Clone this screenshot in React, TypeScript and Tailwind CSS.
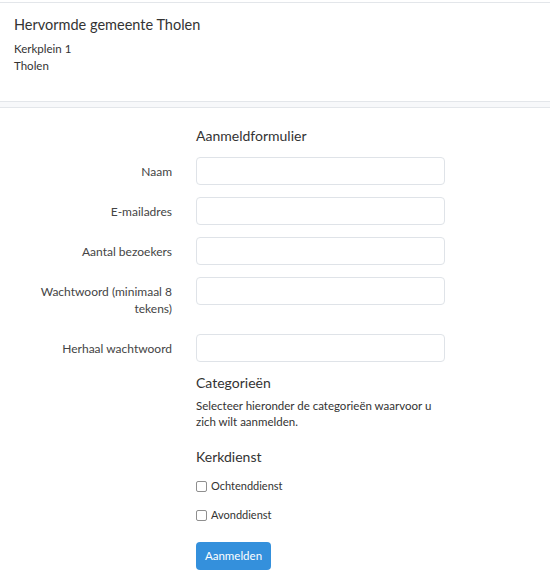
import React from "react";

type Field = { label: string; type: string };

const fields: Field[] = [
  { label: "Naam", type: "text" },
  { label: "E-mailadres", type: "email" },
  { label: "Aantal bezoekers", type: "number" },
  { label: "Wachtwoord (minimaal 8 tekens)", type: "password" },
  { label: "Herhaal wachtwoord", type: "password" },
];

export default function App() {
  return (
    <div className="min-h-[583px] bg-white text-[#212529] font-['Lato',sans-serif] text-[11.5px]">
      {/* kaart met adres */}
      <div className="mt-[2px] border-y border-[#e3e6ea] px-[14px] pt-[12px] h-[100px]">
        <div className="text-[14.5px] leading-[20px] text-[#333]">Hervormde gemeente Tholen</div>
        <div className="mt-[5px] leading-[17px] text-[#333]">Kerkplein 1</div>
        <div className="leading-[17px] text-[#333]">Tholen</div>
      </div>
      <div className="h-[6px] bg-[#f7f8fa] border-b border-[#e3e6ea]" />

      <div className="pt-[18px]">
        <div className="ml-[196px] text-[14px] leading-[20px] text-[#333]">Aanmeldformulier</div>

        <div className="mt-[11px] flex flex-col gap-[12px]">
          {fields.map((f) => (
            <div key={f.label} className="flex items-start">
              <label className="w-[172px] shrink-0 text-right text-[12px] leading-[17px] py-[5.5px] pl-[30px] text-[#444]">
                {f.label}
              </label>
              <input
                type={f.type}
                className="ml-[24px] w-[249px] h-[28px] rounded-[4px] border border-[#dfe3e8] bg-white"
              />
            </div>
          ))}
        </div>

        <div className="ml-[196px] w-[245px]">
          <div className="mt-[12px] text-[14px] leading-[18px] text-[#333]">Categorieën</div>
          <p className="mt-[6px] leading-[16px] text-[#333]">
            Selecteer hieronder de categorieën waarvoor u zich wilt aanmelden.
          </p>
          <div className="mt-[18px] text-[14px] leading-[18px] text-[#333]">Kerkdienst</div>

          <label className="mt-[12px] flex items-center gap-[4px] h-[17px] text-[11px] text-[#333]">
            <input type="checkbox" className="appearance-none w-[11px] h-[11px] m-0 border border-[#8f8f8f] rounded-[2px] bg-white" />
            Ochtenddienst
          </label>
          <label className="mt-[12px] flex items-center gap-[4px] h-[17px] text-[11px] text-[#333]">
            <input type="checkbox" className="appearance-none w-[11px] h-[11px] m-0 border border-[#8f8f8f] rounded-[2px] bg-white" />
            Avonddienst
          </label>

          <button className="mt-[18px] h-[28px] w-[75px] rounded-[4px] bg-[#3490dc] text-white text-[11.5px]">
            Aanmelden
          </button>
        </div>
      </div>
    </div>
  );
}
